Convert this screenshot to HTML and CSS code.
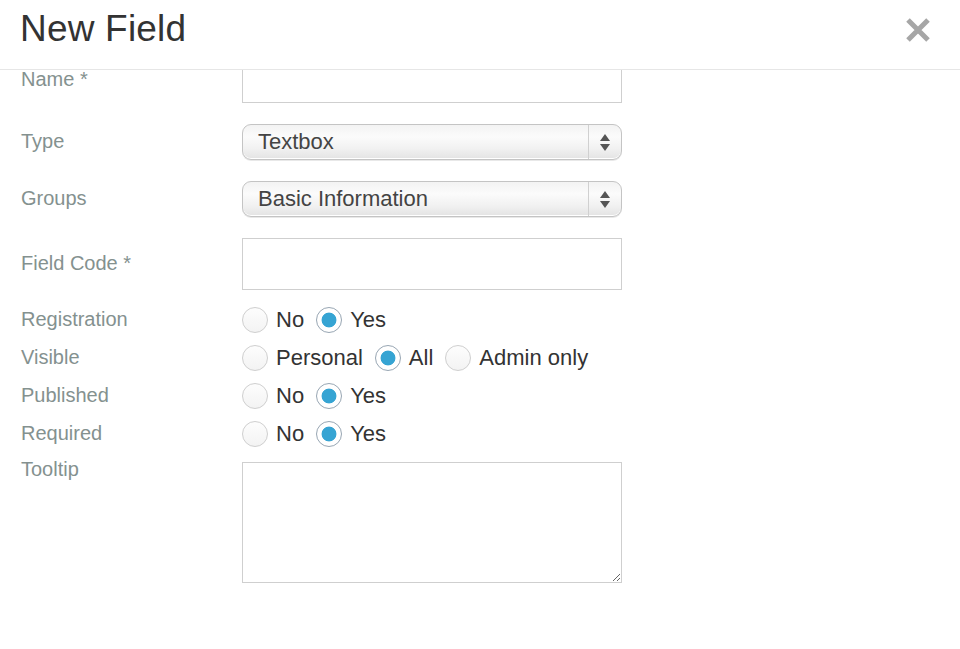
FILE: index.html
```html
<!DOCTYPE html>
<html>
<head>
<meta charset="utf-8">
<link rel="stylesheet" href="styles.css">
</head>
<body>
<div class="modal">
  <header class="modal-header">
    <h1 class="title">New Field</h1>
    <button class="close" type="button" aria-label="Close">
      <svg width="26" height="26" viewBox="0 0 26 26"><path d="M3 3 L23 23 M23 3 L3 23" stroke="#a6a6a6" stroke-width="5" stroke-linecap="butt"/></svg>
    </button>
  </header>
  <div class="modal-body">
    <form class="form">
      <div class="row row-tall">
        <label class="label label-name">Name *</label>
        <input class="input" type="text">
      </div>
      <div class="row row-select">
        <label class="label">Type</label>
        <div class="select"><span class="select-value">Textbox</span><span class="select-arrows"><i class="up"></i><i class="down"></i></span></div>
      </div>
      <div class="row row-select">
        <label class="label">Groups</label>
        <div class="select"><span class="select-value">Basic Information</span><span class="select-arrows"><i class="up"></i><i class="down"></i></span></div>
      </div>
      <div class="row row-tall row-code">
        <label class="label">Field Code *</label>
        <input class="input" type="text">
      </div>
      <div class="radio-rows">
        <div class="row row-radio">
          <span class="label">Registration</span>
          <div class="radios">
            <span class="radio"></span><span class="radio-text">No</span>
            <span class="radio checked"></span><span class="radio-text">Yes</span>
          </div>
        </div>
        <div class="row row-radio">
          <span class="label">Visible</span>
          <div class="radios">
            <span class="radio"></span><span class="radio-text">Personal</span>
            <span class="radio checked"></span><span class="radio-text">All</span>
            <span class="radio"></span><span class="radio-text">Admin only</span>
          </div>
        </div>
        <div class="row row-radio">
          <span class="label">Published</span>
          <div class="radios">
            <span class="radio"></span><span class="radio-text">No</span>
            <span class="radio checked"></span><span class="radio-text">Yes</span>
          </div>
        </div>
        <div class="row row-radio">
          <span class="label">Required</span>
          <div class="radios">
            <span class="radio"></span><span class="radio-text">No</span>
            <span class="radio checked"></span><span class="radio-text">Yes</span>
          </div>
        </div>
      </div>
      <div class="row row-area">
        <label class="label">Tooltip</label>
        <textarea class="textarea"></textarea>
      </div>
    </form>
  </div>
</div>
</body>
</html>
```

FILE: styles.css
```css
* { box-sizing: border-box; }
html, body { margin: 0; padding: 0; background: #fff; }
body { font-family: "Liberation Sans", Arial, sans-serif; color: #333; }

.modal { width: 960px; height: 649px; display: flex; flex-direction: column; overflow: hidden; }

.modal-header {
  height: 70px;
  flex: none;
  border-bottom: 1px solid #e6e6e6;
  display: flex;
  align-items: center;
  justify-content: space-between;
  padding: 0 29px 0 20px;
  position: relative;
  z-index: 1;
  background: #fff;
}
.title { margin: 0; font-size: 37px; font-weight: normal; color: #333; line-height: 1; padding-bottom: 13px; letter-spacing: 0.2px; }
.close { border: 0; background: none; padding: 0; width: 26px; height: 26px; margin-bottom: 10px; cursor: pointer; display: block; }
.close svg { display: block; }

.modal-body { flex: 1; overflow: hidden; }
.form { margin-top: -19px; padding-left: 21px; display: flex; flex-direction: column; }

.row { display: flex; align-items: center; }
.label { width: 221px; flex: none; font-size: 20px; line-height: 24px; color: #84918f; margin-top: -3px; }
.label-name { margin-top: 0; line-height: 14px; position: relative; top: 2px; }

.input {
  width: 380px; height: 52px;
  border: 1px solid #cfcfcf;
  background: #fff;
  font: inherit;
  padding: 0 12px;
}
.row-select { margin-top: 21px; }
.row-code { margin-top: 21px; }

.select {
  width: 380px; height: 36px;
  border: 1px solid #c4c4c4;
  border-radius: 9px;
  background: linear-gradient(to bottom, #f3f3f3 0%, #fbfbfb 35%, #f1f1f1 70%, #e3e3e3 100%);
  box-shadow: inset 0 -1px 0 #fff, 0 1px 0 #e8e8e8;
  display: flex;
  align-items: center;
}
.select-value { flex: 1; padding-left: 15px; font-size: 22px; color: #444; }
.select-arrows {
  width: 33px; height: 100%;
  border-left: 1px solid #d0d0d0;
  display: flex; flex-direction: column; align-items: center; justify-content: center; gap: 3px;
}
.select-arrows i { display: block; width: 0; height: 0; border-left: 5px solid transparent; border-right: 5px solid transparent; }
.select-arrows .up { border-bottom: 7px solid #555; }
.select-arrows .down { border-top: 7px solid #555; }

.radio-rows { margin-top: 17px; display: flex; flex-direction: column; gap: 12px; }
.row-radio { height: 26px; }
.row-radio .label { margin-top: -2px; }
.radios { display: flex; align-items: center; }
.radio {
  width: 26px; height: 26px; flex: none;
  border-radius: 50%;
  border: 1px solid #cfcfcf;
  background: linear-gradient(#fdfdfd, #f3f3f3);
  margin-right: 8px;
}
.radio.checked {
  border: 1.5px solid #98a6b3;
  background: radial-gradient(circle, #36a4d3 0, #36a4d3 7px, #fff 7.8px);
}
.radio-text { font-size: 22px; color: #333; margin-right: 12px; line-height: 26px; }

.row-area { margin-top: 15px; align-items: flex-start; }
.row-area .label { margin-top: -5px; }
.textarea {
  width: 380px; height: 121px;
  border: 1px solid #cfcfcf;
  background: #fff;
  resize: both;
  font: inherit;
  display: block;
}
```
